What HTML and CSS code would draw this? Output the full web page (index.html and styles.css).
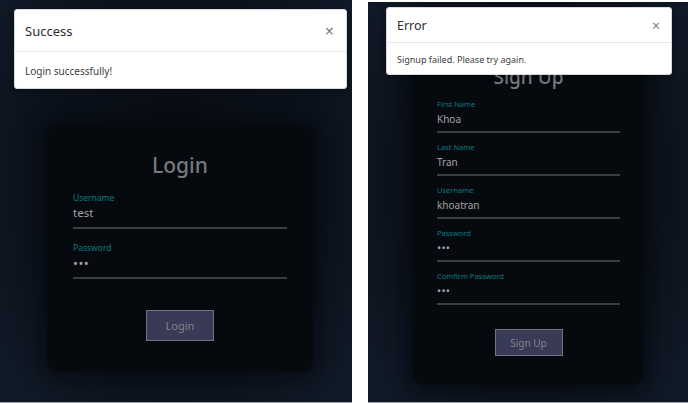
FILE: index.html
```html
<!DOCTYPE html>
<html lang="en">
<head>
<meta charset="utf-8">
<title>Auth screens</title>
<link rel="stylesheet" href="styles.css">
</head>
<body>
<div class="shots">
  <section class="panel panel-login">
    <div class="toast toast-lg">
      <div class="toast-header"><span class="toast-title">Success</span><span class="toast-close">×</span></div>
      <div class="toast-body">Login successfully!</div>
    </div>
    <div class="card card-login">
      <h1 class="card-title">Login</h1>
      <div class="field"><label class="field-label">Username</label><div class="field-value">test</div></div>
      <div class="field"><label class="field-label">Password</label><div class="field-value dots">•••</div></div>
      <div class="btn-row"><button class="btn">Login</button></div>
    </div>
  </section>
  <section class="panel panel-signup">
    <div class="card card-signup">
      <h1 class="card-title">Sign Up</h1>
      <div class="field"><label class="field-label">First Name</label><div class="field-value">Khoa</div></div>
      <div class="field"><label class="field-label">Last Name</label><div class="field-value">Tran</div></div>
      <div class="field"><label class="field-label">Username</label><div class="field-value">khoatran</div></div>
      <div class="field"><label class="field-label">Password</label><div class="field-value dots">•••</div></div>
      <div class="field"><label class="field-label">Comfirm Password</label><div class="field-value dots">•••</div></div>
      <div class="btn-row"><button class="btn">Sign Up</button></div>
    </div>
    <div class="toast toast-sm">
      <div class="toast-header"><span class="toast-title">Error</span><span class="toast-close">×</span></div>
      <div class="toast-body">Signup failed. Please try again.</div>
    </div>
  </section>
</div>
</body>
</html>
```

FILE: styles.css
```css
* { box-sizing: border-box; }
html, body { margin: 0; padding: 0; background: #ffffff; }
body { font-family: "Noto Sans", "Open Sans", sans-serif; width: 688px; height: 403px; overflow: hidden; }

.shots { display: flex; align-items: flex-start; gap: 16px; height: 403px; }

.panel {
  position: relative;
  background: radial-gradient(ellipse 70% 80% at 50% 45%, #080c13 0%, #0b111b 55%, #111b29 100%);
  border-bottom: 1px solid #9aa0a8;
  overflow: hidden;
}
.panel-login { width: 352px; height: 403px; padding: 126px 0 0 47px; }
.panel-signup { width: 320px; height: 401px; margin-top: 2px; padding: 38px 0 0 45px; }

.card {
  background: #06090e;
  border-radius: 11px;
  box-shadow: 0 0 18px 6px rgba(3, 6, 10, 0.55);
  display: flex;
  flex-direction: column;
}
.card-login { width: 266px; height: 246px; padding: 24px 26px 0; }
.card-signup { width: 230px; height: 345px; padding: 24px 23px 0 24px; }

.card-title {
  margin: 0;
  text-align: center;
  color: #767b80;
  font-weight: 500;
}
.card-login .card-title { font-size: 21px; line-height: 30px; }
.card-signup .card-title { font-size: 19px; line-height: 26px; }

.field { display: flex; flex-direction: column; border-bottom: 2px solid #3a3d42; }
.field-label { color: #0f7a80; }
.field-value { color: #a2a4a8; }

.card-login .field { margin-top: 12px; }
.card-login .field + .field { margin-top: 13px; }
.card-login .field-label { font-size: 8.5px; line-height: 12px; }
.card-login .field-value { font-size: 11.5px; line-height: 16px; margin-top: 1px; padding-bottom: 6px; }
.card-login .dots { font-size: 13px; letter-spacing: 0.5px; }

.card-signup .field { margin-top: 9px; }
.card-signup .field-label { font-size: 7.5px; line-height: 11px; }
.card-signup .field-value { font-size: 10px; line-height: 14px; margin-top: 2px; padding-bottom: 5px; }
.card-signup .dots { font-size: 11px; letter-spacing: 0.3px; }

.btn-row { display: flex; justify-content: center; }
.btn {
  font-family: inherit;
  background: #393a55;
  border: 1px solid #727480;
  color: #80838c;
  padding: 0;
}
.card-login .btn-row { margin-top: 31px; }
.card-login .btn { width: 68px; height: 31px; font-size: 11px; }
.card-signup .btn-row { margin-top: 24px; }
.card-signup .btn { width: 68px; height: 27px; font-size: 10px; }

.toast {
  position: absolute;
  background: #ffffff;
  border: 1px solid #d8dadd;
  border-radius: 3px;
  box-shadow: 0 2px 6px rgba(0, 0, 0, 0.25);
  color: #3a3d42;
}
.toast-header {
  display: flex;
  align-items: center;
  justify-content: space-between;
  border-bottom: 1px solid #e6e8ea;
}
.toast-title { color: #2a2d31; }
.toast-close { color: #7a7d82; }

.toast-lg { left: 14px; top: 9px; width: 333px; height: 80px; }
.toast-lg .toast-header { height: 42px; padding: 0 12px 0 10px; }
.toast-lg .toast-title { font-size: 13px; }
.toast-lg .toast-close { font-size: 16px; }
.toast-lg .toast-body { font-size: 10px; padding: 12px 10px; }

.toast-sm { left: 18px; top: 5px; width: 286px; height: 68px; }
.toast-sm .toast-header { height: 35px; padding: 0 11px 0 10px; }
.toast-sm .toast-title { font-size: 12.5px; }
.toast-sm .toast-close { font-size: 14px; }
.toast-sm .toast-body { font-size: 9px; padding: 10px 10px; }
```
